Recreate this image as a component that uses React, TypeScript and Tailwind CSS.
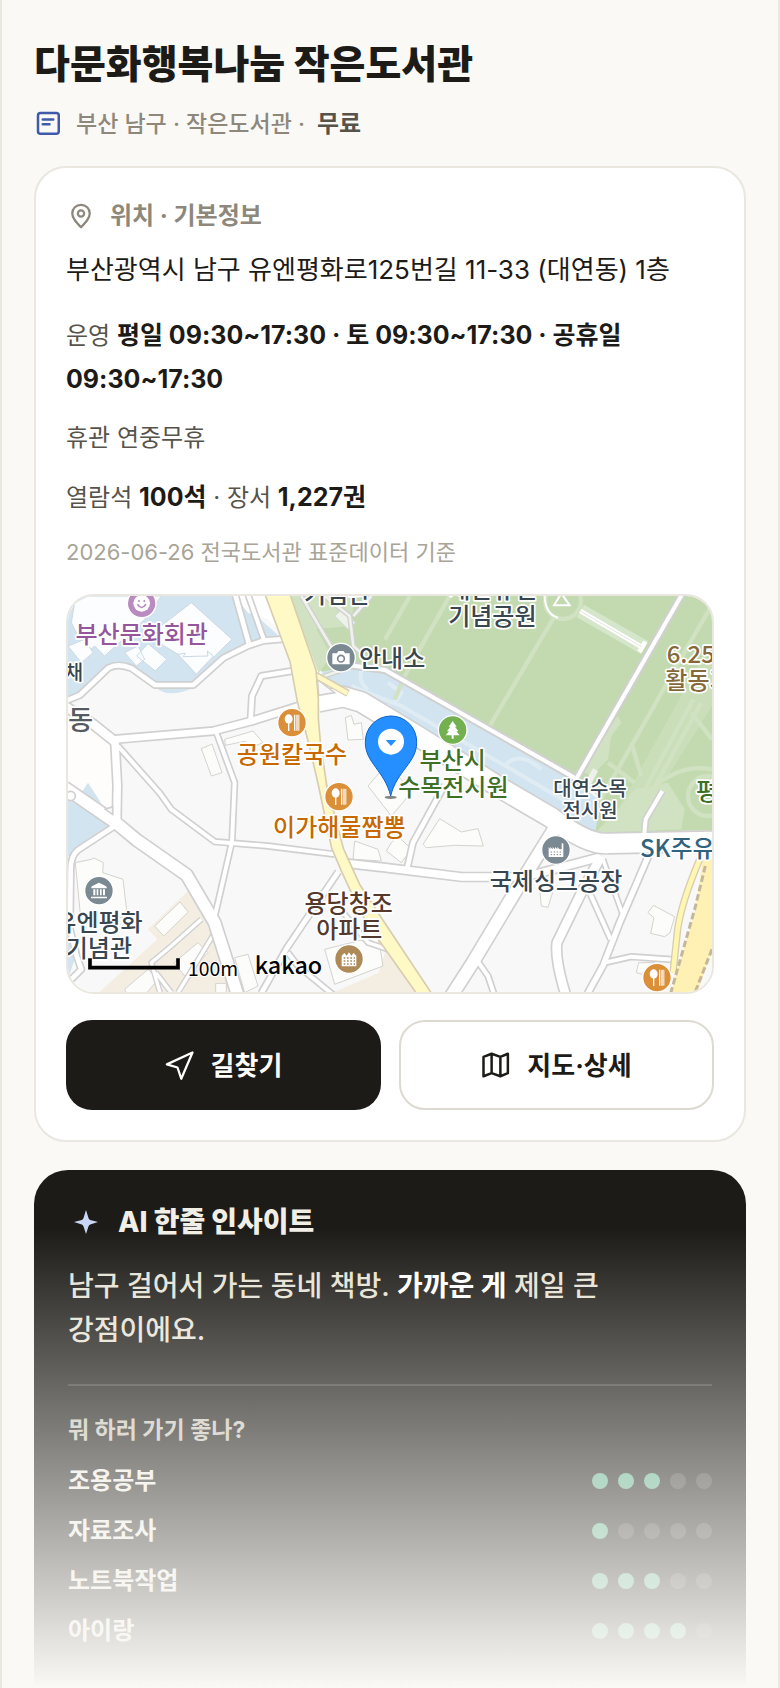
import type { ReactNode } from "react";

type Rating = { label: string; score: number };
type Road = { d: string; w: number };
type Label = {
  text: string;
  x: number;
  y: number;
  color: string;
  size?: number;
  anchor?: "start" | "middle" | "end";
};

const ratings: Rating[] = [
  { label: "조용공부", score: 3 },
  { label: "자료조사", score: 1 },
  { label: "노트북작업", score: 3 },
  { label: "아이랑", score: 4 },
];

const roads: Road[] = [
  { d: "M-10 316L36 297L121 216Q150 200 191 217L261 267H376L466 186L536 151L586 134L650 129", w: 14 },
  { d: "M500 -10L544 148", w: 14 },
  { d: "M538 -10L588 132", w: 12 },
  { d: "M-10 330L76 385L141 437", w: 26 },
  { d: "M141 430L436 405L551 375L700 328", w: 20 },
  { d: "M690 222L580 240L552 300L548 372", w: 14 },
  { d: "M141 437L148 567L146 680", w: 22 },
  { d: "M150 450L276 592L310 640L440 737L600 750L800 775", w: 12 },
  { d: "M446 412L500 560L492 737L436 980", w: 12 },
  { d: "M140 690L30 762Q8 780 8 820L6 1000L26 1080L40 1120L0 1160", w: 14 },
  { d: "M836 802L951 815L1181 843H1370L1590 785", w: 22 },
  { d: "M811 827L656 1057L580 1192", w: 14 },
  { d: "M660 1070L690 1110L800 1200", w: 12 },
  { d: "M826 950L900 1040L960 1060", w: 10 },
  { d: "M1130 567L1035 740L1018 815", w: 14 },
  { d: "M1225 1090L1260 1140L1280 1200", w: 12 },
  { d: "M1565 890L1628 1030", w: 12 },
  { d: "M1605 790L1664 955", w: 10 },
  { d: "M1741 780L1655 980L1606 1107L1555 1200", w: 16 },
  { d: "M1610 1100L1690 1082L1830 1092", w: 12 },
  { d: "M1783 585L1733 670L1728 720", w: 12 },
  { d: "M1600 780L1545 880L1467 1040Q1460 1090 1494 1200", w: 26 },
  { d: "M1470 680L1340 890L1216 1097L1150 1200", w: 36 },
  { d: "M-10 575L146 682L206 732L356 837L440 980L510 1200", w: 34 },
  { d: "M750 317L826 302L880 318L1040 415L1300 577L1450 665Q1560 748 1620 742L1940 736", w: 58 },
];

const labels: Label[] = [
  { text: "부산문화회관", x: 221, y: 141, color: "#94579c" },
  { text: "채", x: 18, y: 251, color: "#38474f", size: 60 },
  { text: "동", x: 38, y: 401, color: "#555b60", size: 82 },
  { text: "기념관", x: 807, y: 20, color: "#38474f" },
  { text: "안내소", x: 873, y: 213, color: "#38474f", anchor: "start" },
  { text: "재한유엔", x: 1273, y: 6, color: "#38474f" },
  { text: "기념공원", x: 1273, y: 86, color: "#38474f" },
  { text: "6.25", x: 1796, y: 200, color: "#85693a", anchor: "start" },
  { text: "활동가", x: 1792, y: 279, color: "#85693a", anchor: "start" },
  { text: "공원칼국수", x: 672, y: 501, color: "#c76800" },
  { text: "이가해물짬뽕", x: 814, y: 721, color: "#c76800" },
  { text: "부산시", x: 1154, y: 519, color: "#3e7026" },
  { text: "수목전시원", x: 1156, y: 599, color: "#3e7026" },
  { text: "대연수목", x: 1566, y: 600, color: "#38474f", size: 60 },
  { text: "전시원", x: 1566, y: 665, color: "#38474f", size: 60 },
  { text: "평화", x: 1884, y: 611, color: "#3e7026", anchor: "start" },
  { text: "SK주유소", x: 1716, y: 784, color: "#2f6380", anchor: "start" },
  { text: "국제싱크공장", x: 1464, y: 881, color: "#38474f" },
  { text: "용당창조", x: 842, y: 949, color: "#54392c" },
  { text: "아파트", x: 844, y: 1026, color: "#54392c" },
  { text: "유엔평화", x: 224, y: 1004, color: "#38474f", anchor: "end" },
  { text: "기념관", x: 192, y: 1083, color: "#38474f", anchor: "end" },
];

function Marker({ x, y, color, children }: { x: number; y: number; color: string; children: ReactNode }) {
  return (
    <g transform={`translate(${x} ${y})`}>
      <circle r="43" fill={color} stroke="#fff" strokeWidth="4" />
      {children}
    </g>
  );
}

function Cutlery() {
  return (
    <g fill="#fff">
      <ellipse cx="-10" cy="-11" rx="12" ry="14" />
      <path d="M-12 0h4v25h-4zM6-24h4v48h-4zM13-24h4v48h-4zM19-24h3v48h-3z" />
    </g>
  );
}

function MapView() {
  return (
    <svg
      viewBox="0 0 1932 1188"
      className="block h-auto w-full font-['Noto_Sans_CJK_KR',sans-serif]"
      role="img"
      aria-label="다문화행복나눔 작은도서관 주변 지도"
    >
      <rect width="1932" height="1188" fill="#f8f8f8" />
      <path d="M-5 345L141 445L146 640L110 655L-5 570Z" fill="#fefdfb" />

      {/* Water */}
      <g fill="#d2e4f0">
        <path d="M0 0H500L640 127L536 151L466 186L376 275Q300 310 261 272L191 217Q150 200 121 216L36 297L0 312Z" />
        <path d="M0 610L130 690L10 780H0ZM0 1000L20 1090L0 1150ZM40 590L100 622L60 560Z" />
        <path d="M760 236L841 292L961 327L1101 422L1351 572L1541 692L1581 712L1651 662L1511 542L951 207L780 190Z" />
      </g>
      <g fill="none" stroke="#e0ecf4" strokeWidth="12">
        <path d="M850 270L1000 330L1330 520L1500 620M1310 510Q1350 460 1420 520M880 220Q870 260 900 280M960 260L1000 290L980 320" />
      </g>
      <path d="M500 0H600L650 120L600 70L540 50Z" fill="#fff" />

      {/* Parks */}
      <path d="M676 0L761 227L820 217L951 212L1521 539L1600 610L1581 712L1932 702V0Z" fill="#c3dab0" />
      <g fill="#d0e2c1">
        <path d="M666 0L752 232L790 180L690 0ZM690 0L735 100L850 90L860 0Z" />
        <path d="M1581 712L1650 640L1700 580L1800 560L1850 640L1840 700Z" />
        <path d="M1530 520L1620 400L1650 360L1660 380L1630 420L1620 490L1570 540Z" />
        <path d="M1650 640L1900 190L1932 200V330L1800 540L1760 590Z" opacity=".5" />
      </g>
      <g fill="none" stroke="#d0e2c1" strokeWidth="13">
        <path d="M1026 0L951 130M1145 0L1010 240L980 310M1460 60L1265 390M1930 30L1860 150L1690 450L1580 640" />
        <path d="M1876 310L1720 600M1900 320L1750 590M1870 350L1932 430M1690 440L1720 540M1620 500L1700 560M1740 590Q1830 500 1932 520" />
        <circle cx="1920" cy="600" r="60" />
        <circle cx="1485" cy="15" r="54" />
      </g>
      <path d="M1537 45L1730 155" stroke="#d6e6ca" strokeWidth="44" />
      <path d="M1537 45L1720 152M1732 137L1714 168" stroke="#fff" strokeWidth="14" />
      <path d="M1537 45L1720 152" stroke="#d0d8cc" strokeWidth="2" />
      <path d="M1430 0Q1432 55 1470 65M1458 28L1480 -8L1505 28Z" fill="none" stroke="#fff" strokeWidth="6" />
      <path d="M1545 570L1575 517L1590 525L1562 580Z" fill="#eef1ea" />

      {/* Old housing blocks */}
      <path d="M360 885L240 1000L268 1030L90 1192H490L440 1000ZM790 1192L932 1130L960 1040L1060 1192Z" fill="#f4ede2" />
      <g fill="#fcfcfb" stroke="#d5d3ce" strokeWidth="3">
        <path d="M260 990L336 918L361 948L287 1020ZM318 1100L390 1040L420 1070L350 1140ZM170 1180L240 1120L270 1150L235 1192H175ZM443 1162H475V1192H443Z" />
        <path d="M22 800L70 790L78 786L106 800L104 830L165 850L178 960L40 985Z" />
        <path d="M500 1085L540 1075L570 1170L530 1190ZM770 1060L930 1020L945 1110L800 1165Z" />
        <path d="M400 458L432 444L462 530L430 540ZM470 430L555 405L585 440L560 450L530 436L472 448Z" />
        <path d="M832 365L850 358L858 385L880 380L886 430L840 432ZM900 570L960 500L1030 590L970 660Z" />
        <path d="M860 735L930 760L940 795L855 790ZM970 740L990 720L1030 760L1000 800L955 765Z" />
        <path d="M1065 745L1115 668L1180 708L1230 698L1246 750L1160 748L1075 755Z" />
        <path d="M1415 880L1460 870L1440 934L1420 930ZM1740 950L1756 928L1820 962L1806 1010L1790 1022L1748 1012L1758 965Z" />
        <path d="M1712 1100H1760L1745 1140L1705 1130Z" />
      </g>
      <g fill="#fbfdfe" stroke="#cdd9e2" strokeWidth="3">
        <path d="M20 20L60 0H280L230 70L110 180L80 150L55 170L10 80Z" />
        <path d="M370 20L492 130L440 180L385 235L330 175L240 120Z" />
        <path d="M240 143L296 190L262 225L206 180ZM0 150L50 130L75 170L40 200ZM170 170L210 150L230 190L205 210Z" />
        <path d="M330 175L352 172L345 182L420 180L418 165L436 180L385 235Z" />
        <path d="M800 60L822 40L862 80L840 100Z" fill="#eef3ea" />
      </g>
      <path d="M276 1190L250 1100L310 1050L400 970M330 1190L440 1010M264 1130L310 1190" fill="none" stroke="#d0d0d0" strokeWidth="18" />
      <path d="M276 1190L250 1100L310 1050L400 970M330 1190L440 1010M264 1130L310 1190" fill="none" stroke="#fff" strokeWidth="10" />

      {/* Road casings go first so that crossings stay open */}
      <g fill="none" strokeLinejoin="round">
        {roads.map((road) => (
          <path key={road.d} d={road.d} stroke="#d0d0d0" strokeWidth={road.w + 10} />
        ))}
        <path d="M700 0L830 220L770 240M770 0L845 60L856 150L890 180M856 60L910 0" stroke="#d0d0d0" strokeWidth="16" />
        <path d="M790 200L951 222L1525 548L1845 -10" stroke="#d0d0d0" strokeWidth="24" />
        {roads.map((road) => (
          <path key={road.d} d={road.d} stroke="#fff" strokeWidth={road.w} />
        ))}
        <path d="M700 0L830 220L770 240M770 0L845 60L856 150L890 180M856 60L910 0" stroke="#eef2ea" strokeWidth="8" />
        <path d="M790 200L951 222L1525 548L1845 -10" stroke="#fff" strokeWidth="12" />
      </g>
      <path d="M112 640L134 632V655Z" fill="#f8f8f8" stroke="#d0d0d0" strokeWidth="5" />
      <path d="M748 250L800 290L752 298Z" fill="#f8f8f8" stroke="#d0d0d0" strokeWidth="5" />
      <circle cx="8" cy="600" r="14" fill="#fff" stroke="#d0d0d0" strokeWidth="5" />

      {/* Yellow trunk roads */}
      <path d="M742 238L840 292" stroke="#d8cdb0" strokeWidth="22" />
      <path d="M742 238L838 292" stroke="#fff8c4" strokeWidth="14" />
      <path
        d="M591 -5L666 197L688 317L721 437L751 567L791 757L821 827L876 947L936 1037L1051 1200H1096L951 982L876 867L844 797L826 757L776 567L757 437L751 367V307L744 222L666 -5Z"
        fill="#fff9c6"
        stroke="#d8cdb0"
        strokeWidth="5"
      />
      <path d="M1905 790L1880 950L1805 1200H1885L1932 1060V790Z" fill="#fff0b3" />
      <path d="M1895 790Q1840 920 1829 1000L1815 1130" fill="none" stroke="#d8cdb0" strokeWidth="22" />
      <path d="M1895 790Q1840 920 1829 1000L1815 1130" fill="none" stroke="#fff6b0" strokeWidth="14" />
      <path d="M1912 810L1880 940L1808 1192M1932 1060L1880 1192" fill="none" stroke="#c5b79a" strokeWidth="9" strokeDasharray="20 9" />

      {/* Place names */}
      <g fontWeight="500" stroke="#fff" strokeWidth="10" strokeLinejoin="round" paintOrder="stroke">
        {labels.map((label) => (
          <text
            key={`${label.text}-${label.y}`}
            x={label.x}
            y={label.y}
            fill={label.color}
            fontSize={label.size ?? 72}
            textAnchor={label.anchor ?? "middle"}
          >
            {label.text}
          </text>
        ))}
      </g>

      <Marker x={221} y={22} color="#b98bc0">
        <circle r="25" fill="#fff" />
        <path d="M-13 3Q0 22 13 3" fill="none" stroke="#b98bc0" strokeWidth="5" />
        <circle cx="-8" cy="-7" r="3" fill="#b98bc0" />
        <circle cx="8" cy="-7" r="3" fill="#b98bc0" />
      </Marker>
      <Marker x={819} y={185} color="#7b8a92">
        <path d="M-26-13H-12L-8-20H8L12-13H26V20H-26Z" fill="#fff" />
        <circle cy="3" r="10" fill="#fff" stroke="#7b8a92" strokeWidth="5" />
      </Marker>
      <Marker x={672} y={380} color="#dc8f39">
        <Cutlery />
      </Marker>
      <Marker x={813} y={602} color="#dc8f39">
        <Cutlery />
      </Marker>
      <Marker x={1767} y={1145} color="#dc8f39">
        <Cutlery />
      </Marker>
      <Marker x={1154} y={402} color="#73b050">
        <path d="M0-27L12-10H7L17 4H11L21 16H3V26H-3V16H-21L-11 4H-17L-7-10H-12Z" fill="#fff" />
      </Marker>
      <Marker x={1464} y={762} color="#7b8a92">
        <path d="M-22 21V-9L-17-2V-9L-10-2V-9L-3-2V-9L4-2V-9L11-2L17-2V-20H22V21Z" fill="#fff" />
        <path d="M-16 6H18M-16 14H18" stroke="#7b8a92" strokeWidth="3" strokeDasharray="4 5" />
      </Marker>
      <Marker x={93} y={884} color="#7b8a92">
        <path d="M0-24Q14-18 23-12V-7H-23V-12Q-14-18 0-24ZM-17-4h6v18h-6zM-7-4h5v18h-5zM3-4h5v18h-5zM12-4h6v18h-6zM-24 18h48v5h-48z" fill="#fff" />
      </Marker>
      <Marker x={843} y={1089} color="#ad8a58">
        <path d="M-22 22V-10L-14-18L-7-10L0-20L7-10L14-18L22-10V22Z" fill="#fff" />
        <path d="M-16-3H18M-16 6H18M-16 15H18" stroke="#ad8a58" strokeWidth="4" strokeDasharray="5 5" />
      </Marker>

      {/* Selected place */}
      <ellipse cx="968" cy="604" rx="18" ry="5" fill="#333" opacity=".6" />
      <path
        d="M969 360A77 77 0 0 1 1046 440C1046 500 986 525 968 600C950 525 892 500 892 440A77 77 0 0 1 969 360Z"
        fill="#258fff"
        stroke="#1264c8"
        strokeWidth="3"
      />
      <circle cx="969" cy="437" r="39" fill="#fff" />
      <path d="M953 432H985L969 450Z" fill="#258fff" />

      {/* Scale and provider */}
      <path d="M66 1087V1115H330V1087" fill="none" stroke="#000" strokeWidth="11" />
      <text x="360" y="1139" fontSize="58" fontWeight="400" stroke="#fff" strokeWidth="6" paintOrder="stroke">
        100m
      </text>
      <text x="560" y="1134" fontSize="70" fontWeight="500" stroke="#fff" strokeWidth="6" paintOrder="stroke">
        kakao
      </text>
    </svg>
  );
}

function Sparkle({ className }: { className: string }) {
  return (
    <svg viewBox="0 0 24 24" className={className}>
      <path d="M12 4l1.700 5.500q.3.800 1.100 1.100L20 12l-5.200 1.700q-.8.300-1.100 1.100L12 20l-1.700-5.200q-.3-.8-1.100-1.100L4 12l5.200-1.400q.8-.3 1.100-1.100Z" />
    </svg>
  );
}

function Dots({ score }: { score: number }) {
  return (
    <span className="flex gap-[10px]" role="img" aria-label={`5점 중 ${score}점`}>
      {[1, 2, 3, 4, 5].map((n) => (
        <span key={n} className={n <= score ? "size-4 rounded-full bg-[#61b28c]" : "size-4 rounded-full bg-white/15"} />
      ))}
    </span>
  );
}

function Strong({ children }: { children: ReactNode }) {
  return <b className="text-[25px] leading-none font-bold text-[#1d1b17]">{children}</b>;
}

export default function App() {
  return (
    <main className="relative h-screen overflow-hidden border-x-2 border-[#e9e7e0] bg-[#faf9f6] px-8 pt-9 font-[Inter,'Noto_Sans_CJK_KR',sans-serif] break-keep text-[#1d1b17]">
      <h1 className="text-[39px] leading-[56px] font-extrabold">다문화행복나눔 작은도서관</h1>

      <div className="mt-2 flex h-12 items-center text-[23px] font-medium text-[#8d887b]">
        <svg viewBox="0 0 24 24" className="mr-3 size-[30px] fill-none stroke-[#3f5aa9] stroke-2" strokeLinecap="round">
          <rect x="3.200" y="3.200" width="16.600" height="16.600" rx="2" />
          <path d="M7 8.400h8.400M7 12.200h5.400" />
        </svg>
        부산 남구 · 작은도서관 ·
        <strong className="ml-3 text-2xl font-semibold text-[#57534a]">무료</strong>
      </div>

      {/* Location */}
      <section className="mt-[18px] rounded-[32px] border-2 border-[#e9e7e0] bg-white p-[30px]">
        <h2 className="flex h-9 items-center gap-[14px] text-2xl font-bold text-[#8d887b]">
          <svg viewBox="0 0 24 24" className="size-[30px] fill-none stroke-current stroke-[1.8]" strokeLinejoin="round">
            <path d="M12 21C8.500 17.500 5 14 5 10a7 7 0 0 1 14 0c0 4-3.500 7.500-7 11Z" />
            <circle cx="12" cy="10" r="2.500" />
          </svg>
          위치 · 기본정보
        </h2>
        <p className="mt-4 text-[26px] leading-[40px]">부산광역시 남구 유엔평화로125번길 11-33 (대연동) 1층</p>
        <p className="mt-6 text-2xl leading-[44px] text-[#57534a]">
          운영 <Strong>평일 09:30~17:30 · 토 09:30~17:30 · 공휴일 09:30~17:30</Strong>
        </p>
        <p className="mt-[14px] text-2xl leading-[44px] text-[#57534a]">휴관 연중무휴</p>
        <p className="mt-4 text-2xl leading-[44px] text-[#57534a]">
          열람석 <Strong>100석</Strong> · 장서 <Strong>1,227권</Strong>
        </p>
        <p className="mt-[14px] text-[22px] leading-9 text-[#a8a498]">2026-06-26 전국도서관 표준데이터 기준</p>

        <div className="mt-6 overflow-hidden rounded-[28px] border-2 border-[#e9e7e0]">
          <MapView />
        </div>

        <div className="mt-[26px] grid grid-cols-2 gap-[18px]">
          <button className="flex h-[90px] items-center justify-center gap-4 rounded-[26px] bg-[#1d1b17] text-[26px] font-bold text-white">
            <svg viewBox="0 0 24 24" className="size-[30px] fill-none stroke-current stroke-[1.8]" strokeLinejoin="round">
              <path d="M22 2L1.500 11.500l8.500 2.500l3 9Z" />
            </svg>
            길찾기
          </button>
          <button className="flex h-[90px] items-center justify-center gap-4 rounded-[26px] border-2 border-[#dddad1] bg-white text-[26px] font-bold">
            <svg viewBox="0 0 24 24" className="size-[30px] fill-none stroke-current stroke-2" strokeLinejoin="round">
              <path d="M2 5.500l6.500-2.500l7 2.500l6-2.500v15.500l-6 2.500l-7-2.500l-6.500 2.500ZM8.500 3v15.500M15.500 5.500v15.500" />
            </svg>
            지도·상세
          </button>
        </div>
      </section>

      {/* AI insight */}
      <section className="mt-7 rounded-t-[34px] bg-[#1d1b17] px-[34px] pt-[30px] pb-8 text-[#f1eee6]">
        <h2 className="flex h-11 items-center gap-[14px] text-[28px] font-extrabold">
          <Sparkle className="size-9 fill-[#c9d6f5]" />
          AI 한줄 인사이트
        </h2>
        <p className="mt-5 text-[28px] leading-[44px] font-medium text-[#e6e2d6]">
          남구 걸어서 가는 동네 책방. <b className="font-bold text-white">가까운 게</b> 제일 큰 강점이에요.
        </p>
        <hr className="mt-8 border-t-2 border-white/15" />
        <h3 className="mt-6 text-[23px] leading-10 font-bold text-[#c9c5ba]">뭐 하러 가기 좋나?</h3>
        <ul className="mt-[6px]">
          {ratings.map((rating) => (
            <li key={rating.label} className="flex h-[50px] items-center justify-between text-2xl font-semibold">
              {rating.label}
              <Dots score={rating.score} />
            </li>
          ))}
        </ul>
        <p className="mt-4 flex items-center gap-3 text-[20px] leading-9 text-[#a8a498]">
          <Sparkle className="size-6 fill-[#c9d6f5]" />
          공공데이터(장서·좌석·운영시간)를 바탕으로 AI가 분석했어요
        </p>
      </section>

      {/* Fade over the locked part */}
      <div className="pointer-events-none absolute -inset-x-[2px] bottom-0 h-[460px] bg-linear-to-b from-[#faf9f6]/0 to-[#faf9f6]" />
    </main>
  );
}
